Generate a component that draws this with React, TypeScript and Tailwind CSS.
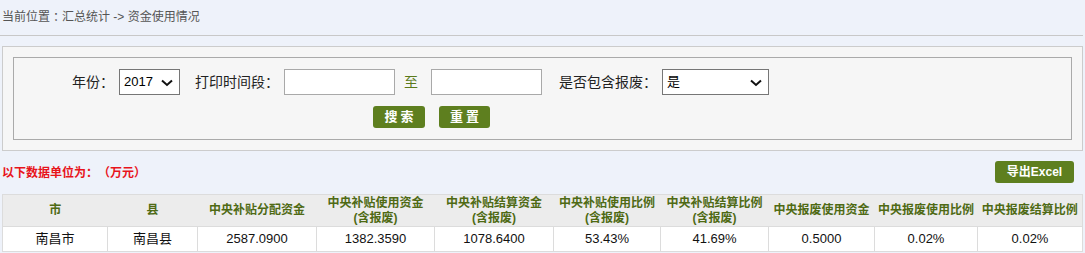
const font = "font-['Liberation_Sans','Noto_Sans_CJK_SC',sans-serif]";

// full-width colon, centred like the reference (SC puts it at the left)
function C() {
  return <span className="font-['Noto_Sans_CJK_TC',sans-serif]">：</span>;
}

function Chevron() {
  return (
    <svg width="12" height="8" viewBox="0 0 12 8" className="absolute right-[6px] top-[9px] pointer-events-none">
      <path d="M1 1.5 L6 6 L11 1.5" fill="none" stroke="#111" strokeWidth="2" />
    </svg>
  );
}

function FakeSelect({ value, width }: { value: string; width: string }) {
  return (
    <div className={`relative h-[26px] ${width} border border-[#767676] bg-white text-[13px] text-black flex items-center pl-[4px]`}>
      {value}
      <Chevron />
    </div>
  );
}

const headers: [string, string?][] = [
  ["市"],
  ["县"],
  ["中央补贴分配资金"],
  ["中央补贴使用资金", "(含报废)"],
  ["中央补贴结算资金", "(含报废)"],
  ["中央补贴使用比例", "(含报废)"],
  ["中央补贴结算比例", "(含报废)"],
  ["中央报废使用资金"],
  ["中央报废使用比例"],
  ["中央报废结算比例"],
];

const widths = ["w-[105px]", "w-[90px]", "w-[119px]", "w-[118px]", "w-[119px]", "w-[107px]", "w-[108px]", "w-[106px]", "w-[103px]", "w-[105px]"];

const row = ["南昌市", "南昌县", "2587.0900", "1382.3590", "1078.6400", "53.43%", "41.69%", "0.5000", "0.02%", "0.02%"];

export default function App() {
  return (
    <div lang="zh-CN" className={`w-[1085px] h-[253px] overflow-hidden bg-[#eef2fa] [text-spacing-trim:space-all] ${font}`}>
      {/* Breadcrumb */}
      <div className="h-[36px] w-[1083px] border-b border-[#c8c8c8] flex items-center pl-[2px] pb-[2px] text-[12px] text-[#555]">
        当前位置<C />汇总统计 -&gt; 资金使用情况
      </div>

      <div className="pl-[2px]">
        {/* Search panel */}
        <div className="mt-[10px] w-[1081px] border border-[#ccc] bg-[#f6f6f6] p-[10px]">
          <div className="h-[83px] border border-[#aaa]">
            <div className="mt-[11px] h-[26px] flex items-center pl-[58px] text-[14px] text-[#222]">
              <span>年份<C /></span>
              <div className="ml-[5px]">
                <FakeSelect value="2017" width="w-[61px]" />
              </div>
              <span className="ml-[15px]">打印时间段<C /></span>
              <div className="ml-[5px] h-[26px] w-[111px] border border-[#a9a9a9] bg-white" />
              <span className="ml-[9px] text-[#5a7a1a]">至</span>
              <div className="ml-[13px] h-[26px] w-[111px] border border-[#a9a9a9] bg-white" />
              <span className="ml-[17px]">是否包含报废<C /></span>
              <div className="ml-[5px]">
                <FakeSelect value="是" width="w-[107px]" />
              </div>
            </div>
            <div className="mt-[11px] flex gap-[14px] pl-[359px]">
              <button className="h-[22px] w-[52px] rounded-[3px] bg-[#5e7f1f] text-white text-[13px] font-bold tracking-[3px] pl-[3px]">搜索</button>
              <button className="h-[22px] w-[51px] rounded-[3px] bg-[#5e7f1f] text-white text-[13px] font-bold tracking-[3px] pl-[3px]">重置</button>
            </div>
          </div>
        </div>

        {/* Unit + export */}
        <div className="mt-[10px] h-[22px] w-[1081px] flex items-center">
          <span className="text-[12px] font-bold text-[#e8141b]">以下数据单位为<C />（万元）</span>
          <button className="ml-auto mr-[9px] h-[22px] w-[79px] rounded-[3px] bg-[#5e7f1f] text-white text-[12px] font-bold">导出Excel</button>
        </div>

        {/* Table */}
        <table className="mt-[11px] w-[1081px] table-fixed border-collapse border border-[#dcdcdc]">
          <thead>
            <tr className="h-[32px] bg-[#ececec]">
              {headers.map(([a, b], i) => (
                <th key={i} className={`${widths[i]} p-0 text-[12px] leading-[15px] font-bold text-[#4f6a14] text-center`}>
                  <div>{a}</div>
                  {b && <div>{b}</div>}
                </th>
              ))}
            </tr>
          </thead>
          <tbody>
            <tr className="h-[25px] bg-white">
              {row.map((v, i) => (
                <td key={i} className="p-0 border border-[#dcdcdc] text-center text-[13px] text-[#111]">{v}</td>
              ))}
            </tr>
          </tbody>
        </table>
      </div>
    </div>
  );
}
